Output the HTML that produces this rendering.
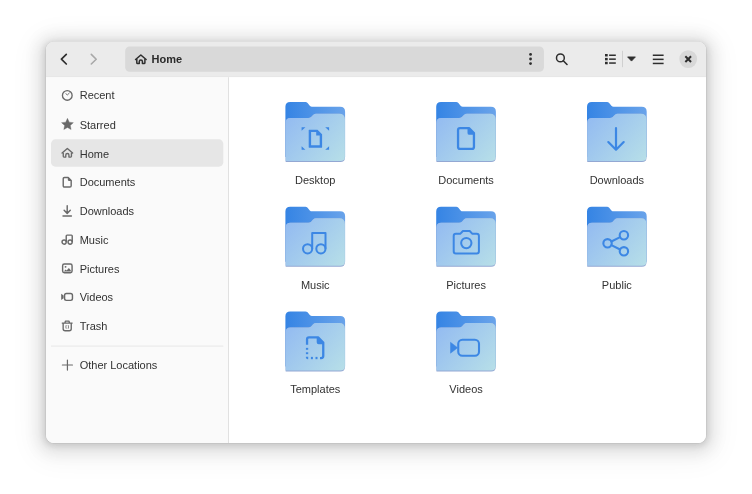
<!DOCTYPE html>
<html lang="en">
<head>
<meta charset="utf-8">
<title>Home</title>
<style>
html,body{margin:0;padding:0;background:#fff;}
body{width:752px;height:494px;position:relative;overflow:hidden;font-family:"Liberation Sans",sans-serif;font-size:11px;color:#323232;}
#shadow{position:absolute;left:46px;top:42px;width:660px;height:401px;border-radius:8px;background:#fff;
 box-shadow:0 0 0 0.75px rgba(0,0,0,0.06),0 1.5px 6px 1.5px rgba(0,0,0,0.115),0 2.25px 15px 7.5px rgba(0,0,0,0.09),0 5px 28px 13px rgba(0,0,0,0.045);}
#gfx{position:absolute;left:0;top:0;}
#txt{position:absolute;left:0;top:0;width:752px;height:494px;will-change:transform;}

.t{position:absolute;line-height:13px;white-space:nowrap;}
.t.b{font-weight:bold;color:#2b2b2b;}
.t.c{width:120px;text-align:center;}
</style>
</head>
<body>
<div id="shadow"></div>
<svg id="gfx" width="752" height="494" viewBox="0 0 752 494">
<defs>
<clipPath id="wclip"><rect x="46" y="41.6" width="660" height="401.4" rx="8"/></clipPath>
<linearGradient id="gb" x1="0" y1="0" x2="1" y2="0"><stop offset="0" stop-color="#3584e4"/><stop offset="1" stop-color="#69a3ea"/></linearGradient>
<linearGradient id="gf" gradientUnits="userSpaceOnUse" x1="2" y1="14" x2="58" y2="60"><stop offset="0" stop-color="#93bbf1"/><stop offset="1" stop-color="#b7dfe8"/></linearGradient>
<g id="folder">
<path d="M0 4.8 Q0 0 4.8 0 H20 Q21.3 0 22.2 0.95 L24.4 3.7 Q25.3 4.65 26.6 4.65 H54.7 Q59.7 4.65 59.7 9.65 V55 H0 Z" fill="url(#gb)"/>
<path d="M0.2 20.9 Q0.2 16.1 5 16.1 H22.9 Q24.5 16.1 25.7 15 L27.7 12.9 Q28.9 11.65 30.6 11.65 H53.9 Q59.5 11.65 59.5 17.25 V55.5 Q59.5 60.1 54.9 60.1 H0.7 Q0.2 60.1 0.2 59.6 Z" fill="#93a8d3"/>
<path d="M0.2 20.9 Q0.2 16.1 5 16.1 H22.9 Q24.5 16.1 25.7 15 L27.7 12.9 Q28.9 11.65 30.6 11.65 H53.9 Q59.5 11.65 59.5 17.25 V54.5 Q59.5 59.1 54.9 59.1 H0.7 Q0.2 59.1 0.2 58.6 Z" fill="url(#gf)"/>
</g>
</defs>
<g clip-path="url(#wclip)">
<rect x="46" y="41" width="660" height="35.5" fill="#ebebeb"/>
<rect x="46" y="76.5" width="660" height="0.75" fill="#dadada"/>
<rect x="46" y="77.25" width="182.1" height="370" fill="#fafafa"/>
<rect x="228.1" y="77.25" width="0.9" height="370" fill="#dedede"/>
<rect x="229.0" y="77.25" width="480" height="370" fill="#ffffff"/>
</g>
<g transform="translate(46 41.5)">
<rect x="79.2" y="4.9" width="418.7" height="25.4" rx="4.5" fill="#d9d9d9"/>
<path d="M20.3 12.9 L15.4 17.7 L20.3 22.5" fill="none" stroke="#2e2e2e" stroke-width="1.7" stroke-linecap="round" stroke-linejoin="round"/>
<path d="M45.3 12.9 L50.2 17.7 L45.3 22.5" fill="none" stroke="#a8a8a8" stroke-width="1.6" stroke-linecap="round" stroke-linejoin="round"/>
<g transform="translate(88.7 11.9) scale(0.75)"><path d="M1.2 8.1 L8.2 2.1 L15.2 8.1" fill="none" stroke="#2e2e2e" stroke-width="2.1" stroke-linecap="round" stroke-linejoin="round"/><path d="M2.8 7.6 V12.4 Q2.8 13.4 3.75 13.4 H6.1 V10.8 Q6.1 8.7 8.2 8.7 Q10.3 8.7 10.3 10.8 V13.4 H12.65 Q13.6 13.4 13.6 12.4 V7.6" fill="none" stroke="#2e2e2e" stroke-width="2" stroke-linejoin="round"/></g>
<g fill="#2e2e2e"><circle cx="484.55" cy="12.9" r="1.4"/><circle cx="484.55" cy="17.5" r="1.4"/><circle cx="484.55" cy="22.1" r="1.4"/></g>
<circle cx="514.4" cy="16.4" r="3.9" fill="none" stroke="#2e2e2e" stroke-width="1.5"/><path d="M517.3 19.3 L521 23" stroke="#2e2e2e" stroke-width="1.6" stroke-linecap="round"/>
<g fill="#2e2e2e"><rect x="559.0" y="12.5" width="2.7" height="2.45"/><rect x="559.0" y="16.4" width="2.7" height="2.45"/><rect x="559.0" y="20.3" width="2.7" height="2.45"/><rect x="563.1" y="13" width="6.7" height="1.5"/><rect x="563.1" y="16.9" width="6.7" height="1.5"/><rect x="563.1" y="20.8" width="6.7" height="1.5"/></g>
<rect x="576.1" y="9.3" width="0.8" height="16.4" fill="#c9c9c9"/>
<path d="M581.6 15.4 H589.4 L585.5 19.6 Z" fill="#2e2e2e" stroke="#2e2e2e" stroke-width="0.8" stroke-linejoin="round"/>
<g fill="#2e2e2e"><rect x="606.8" y="13" width="10.8" height="1.5"/><rect x="606.8" y="17.1" width="10.8" height="1.5"/><rect x="606.8" y="21.2" width="10.8" height="1.5"/></g>
<circle cx="642.2" cy="17.6" r="8.9" fill="#d8d8d8"/><path d="M639.35 14.75 L645.05 20.45 M645.05 14.75 L639.35 20.45" stroke="#2e2e2e" stroke-width="2" stroke-linecap="butt"/>
</g>
<g transform="translate(61.2 89.40) scale(0.75)"><circle cx="8.1" cy="8" r="6.45" fill="none" stroke="#696969" stroke-width="1.8"/><path d="M6.3 5.9 L8.3 7.3 L10.8 4.9" fill="none" stroke="#696969" stroke-width="1.3" stroke-linecap="round" stroke-linejoin="round"/></g>
<g transform="translate(61.2 118.20) scale(0.75)"><path d="M8.35 0.20 L10.67 5.25 L16.20 5.90 L12.11 9.67 L13.20 15.12 L8.35 12.40 L3.50 15.12 L4.59 9.67 L0.50 5.90 L6.03 5.25 Z" fill="#696969" stroke="#696969" stroke-width="0.5" stroke-linejoin="round"/></g>
<rect x="51" y="139.35" width="172.3" height="27.3" rx="4.5" fill="#e6e6e6"/>
<g transform="translate(61.2 147.00) scale(0.75)"><path d="M1.2 8.1 L8.2 2.1 L15.2 8.1" fill="none" stroke="#696969" stroke-width="1.9" stroke-linecap="round" stroke-linejoin="round"/><path d="M2.75 7.6 V12.4 Q2.75 13.4 3.7 13.4 H6.1 V10.8 Q6.1 8.7 8.2 8.7 Q10.3 8.7 10.3 10.8 V13.4 H12.7 Q13.65 13.4 13.65 12.4 V7.6" fill="none" stroke="#696969" stroke-width="1.8" stroke-linejoin="round"/></g>
<g transform="translate(61.2 175.80) scale(0.75)"><path d="M4.4 2.3 H9.3 L13.3 6.3 V13.2 Q13.3 14.9 11.6 14.9 H4.4 Q2.7 14.9 2.7 13.2 V4 Q2.7 2.3 4.4 2.3 Z" fill="none" stroke="#696969" stroke-width="1.9" stroke-linejoin="round"/><path d="M8.8 2.3 V5.4 Q8.8 6.8 10.2 6.8 H13.3 V6.3 L9.3 2.3 Z" fill="#696969"/></g>
<g transform="translate(61.2 204.60) scale(0.75)"><path d="M8 1.4 V11.4 M3.9 7.6 L8 11.7 L12.1 7.6 M2.4 15.1 H13.6" fill="none" stroke="#696969" stroke-width="1.9" stroke-linecap="round" stroke-linejoin="round"/></g>
<g transform="translate(61.2 233.40) scale(0.75)"><circle cx="3.9" cy="11.6" r="2.8" fill="none" stroke="#696969" stroke-width="1.9"/><circle cx="11.9" cy="11.6" r="2.8" fill="none" stroke="#696969" stroke-width="1.9"/><path d="M6.7 11.6 V3.4 Q6.7 2.3 7.8 2.3 H13.6 Q14.7 2.3 14.7 3.4 V11.6" fill="none" stroke="#696969" stroke-width="1.9" stroke-linejoin="round"/></g>
<g transform="translate(61.2 262.20) scale(0.75)"><rect x="1.9" y="2.3" width="12.6" height="11.8" rx="2.3" fill="none" stroke="#696969" stroke-width="1.9"/><path d="M3.6 12.3 L5.8 9.8 L7.3 11 L10.2 7.7 L12.8 10.6 V12.3 Z" fill="#696969"/><circle cx="5.8" cy="6.2" r="1.25" fill="#696969"/></g>
<g transform="translate(61.2 291.00) scale(0.75)"><rect x="4.5" y="3.3" width="10.5" height="9.2" rx="2.4" fill="none" stroke="#696969" stroke-width="1.9"/><path d="M0 3.7 L3.2 6.1 V9.7 L0 12.1 Z" fill="#696969"/></g>
<g transform="translate(61.2 319.80) scale(0.75)"><path d="M2.6 4.8 V11.9 Q2.6 14.6 5.3 14.6 H10.7 Q13.4 14.6 13.4 11.9 V4.8 M1.4 4.4 H14.6 M5 4 L5.6 1.7 H10.4 L11 4" fill="none" stroke="#696969" stroke-width="1.8" stroke-linecap="round" stroke-linejoin="round"/><path d="M6.5 7.6 Q5.7 9.5 6.5 11.4 M9.5 7.6 Q10.3 9.5 9.5 11.4" fill="none" stroke="#696969" stroke-width="1.1" stroke-linecap="round"/></g>
<rect x="51" y="345.7" width="172.3" height="0.75" fill="#e2e2e2"/>
<g transform="translate(61.2 358.80) scale(0.75)"><path d="M8.3 1.6 V15 M1.6 8.3 H15" stroke="#696969" stroke-width="1.6" stroke-linecap="round"/></g>
<g transform="translate(285.4 101.98)"><use href="#folder"/><g transform="translate(0.1 0)"><path fill-rule="evenodd" d="M23.6 27.65 H32 L36.6 32.25 V45.25 Q36.6 45.65 36.2 45.65 H23.6 Q23.2 45.65 23.2 45.25 V28.05 Q23.2 27.65 23.6 27.65 Z M25.6 30.05 V43.25 H34.2 V33.5 H30.7 V30.05 Z" fill="#3c87e4"/><path d="M16.1 25.25 H19.9 L16.1 28.75 Z M43.6 25.25 H39.7 L43.6 28.75 Z M16.1 47.85 H19.9 L16.1 44.35 Z M43.6 47.85 H39.7 L43.6 44.35 Z" fill="#3c87e4"/></g></g>
<g transform="translate(436.2 101.98)"><use href="#folder"/><g transform="translate(0.4 0)"><path d="M23.4 26.15 H32.4 L37.35 31.1 V44.9 Q37.35 46.85 35.4 46.85 H23.4 Q21.45 46.85 21.45 44.9 V28.1 Q21.45 26.15 23.4 26.15 Z" fill="none" stroke="#3c87e4" stroke-width="2.3" stroke-linecap="round" stroke-linejoin="round"/><path d="M30.9 26.15 V30.9 Q30.9 32.8 32.8 32.8 H37.35 V31.1 L32.4 26.15 Z" fill="#3c87e4"/></g></g>
<g transform="translate(587.0 101.98)"><use href="#folder"/><g transform="translate(0.7 0)"><path d="M28.3 26.2 V47.3 M20.6 40.1 L28.3 47.7 L36 40.1" fill="none" stroke="#3c87e4" stroke-width="2.2" stroke-linecap="round" stroke-linejoin="round"/></g></g>
<g transform="translate(285.4 206.68)"><use href="#folder"/><g transform="translate(0.1 0)"><circle cx="22.1" cy="42.15" r="4.6" fill="none" stroke="#3c87e4" stroke-width="2.0" stroke-linecap="round" stroke-linejoin="round"/><circle cx="35.4" cy="42.15" r="4.6" fill="none" stroke="#3c87e4" stroke-width="2.0" stroke-linecap="round" stroke-linejoin="round"/><path d="M26.7 42.15 V26.25 H40 V42.15" fill="none" stroke="#3c87e4" stroke-width="2" stroke-linejoin="round"/></g></g>
<g transform="translate(436.2 206.68)"><use href="#folder"/><g transform="translate(0.4 0)"><path d="M19.3 27.15 H23.6 L26.3 24.35 H33.1 L35.8 27.15 H40.1 Q42.3 27.15 42.3 29.35 V44.65 Q42.3 46.85 40.1 46.85 H19.3 Q17.1 46.85 17.1 44.65 V29.35 Q17.1 27.15 19.3 27.15 Z" fill="none" stroke="#3c87e4" stroke-width="2.0" stroke-linecap="round" stroke-linejoin="round"/><circle cx="29.7" cy="36.35" r="5.15" fill="none" stroke="#3c87e4" stroke-width="2.0" stroke-linecap="round" stroke-linejoin="round"/></g></g>
<g transform="translate(587.0 206.68)"><use href="#folder"/><g transform="translate(0.7 0)"><circle cx="19.85" cy="36.65" r="4.2" fill="none" stroke="#3c87e4" stroke-width="2.1" stroke-linecap="round" stroke-linejoin="round"/><circle cx="36.2" cy="28.55" r="4.2" fill="none" stroke="#3c87e4" stroke-width="2.1" stroke-linecap="round" stroke-linejoin="round"/><circle cx="36.2" cy="44.65" r="4.2" fill="none" stroke="#3c87e4" stroke-width="2.1" stroke-linecap="round" stroke-linejoin="round"/><path d="M23.7 34.8 L32.4 30.4 M23.7 38.5 L32.4 42.8" fill="none" stroke="#3c87e4" stroke-width="2.1" stroke-linecap="round" stroke-linejoin="round"/></g></g>
<g transform="translate(285.4 311.38)"><use href="#folder"/><g transform="translate(0.1 0)"><path d="M21.55 33.4 V27.95 Q21.55 26.0 23.5 26.0 H32.6 L37.75 31.15 V44.7 Q37.75 46.65 35.8 46.65 H34.5" fill="none" stroke="#3c87e4" stroke-width="2.3" stroke-linejoin="round"/><path d="M31.2 26.0 V30.9 Q31.2 32.8 33.1 32.8 H37.75 V31.15 L32.6 26.0 Z" fill="#3c87e4"/><g fill="#3c87e4"><rect x="20.4" y="36.5" width="2.3" height="1.9"/><rect x="20.4" y="40.9" width="2.3" height="1.9"/><path d="M20.4 45.4 H22.7 V47.8 H22.4 Q20.4 47.8 20.4 45.8 Z"/><rect x="25.4" y="45.5" width="2" height="2.3"/><rect x="30" y="45.5" width="2" height="2.3"/></g></g></g>
<g transform="translate(436.2 311.38)"><use href="#folder"/><g transform="translate(0.4 0)"><rect x="21.65" y="28.35" width="20.75" height="16.05" rx="4.1" fill="none" stroke="#3c87e4" stroke-width="2.1" stroke-linecap="round" stroke-linejoin="round"/><path d="M13.9 30.9 L21 36.35 L13.9 41.8 Z" fill="#3c87e4" stroke="#3c87e4" stroke-width="0.5" stroke-linejoin="round"/></g></g>
</svg>
<div id="txt">
<div class="t b" style="left:151.60px;top:53px">Home</div>
<div class="t" style="left:79.70px;top:89px">Recent</div>
<div class="t" style="left:79.70px;top:119px">Starred</div>
<div class="t" style="left:79.70px;top:148px">Home</div>
<div class="t" style="left:79.70px;top:176px">Documents</div>
<div class="t" style="left:79.70px;top:205px">Downloads</div>
<div class="t" style="left:79.70px;top:234px">Music</div>
<div class="t" style="left:79.70px;top:263px">Pictures</div>
<div class="t" style="left:79.70px;top:291px">Videos</div>
<div class="t" style="left:79.70px;top:320px">Trash</div>
<div class="t" style="left:79.70px;top:359px">Other Locations</div>
<div class="t c" style="left:255.25px;top:174px">Desktop</div>
<div class="t c" style="left:406.05px;top:174px">Documents</div>
<div class="t c" style="left:556.85px;top:174px">Downloads</div>
<div class="t c" style="left:255.25px;top:279px">Music</div>
<div class="t c" style="left:406.05px;top:279px">Pictures</div>
<div class="t c" style="left:556.85px;top:279px">Public</div>
<div class="t c" style="left:255.25px;top:383px">Templates</div>
<div class="t c" style="left:406.05px;top:383px">Videos</div>
</div>
</body>
</html>
